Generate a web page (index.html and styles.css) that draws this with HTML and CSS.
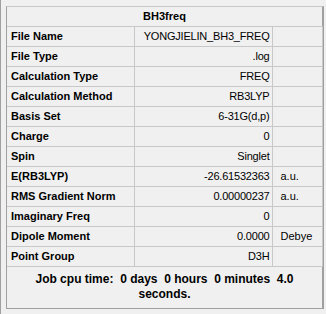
FILE: index.html
```html
<!DOCTYPE html>
<html lang="en">
<head>
  <meta charset="UTF-8">
  <title>BH3freq</title>
  <link rel="stylesheet" href="styles.css">
</head>
<body>
  <div class="panel">
    <table class="summary">
      <colgroup>
        <col class="col-label">
        <col class="col-value">
        <col class="col-unit">
      </colgroup>
      <thead>
        <tr>
          <th colspan="3">BH3freq</th>
        </tr>
      </thead>
      <tbody>
        <tr><td class="label">File Name</td><td class="value">YONGJIELIN_BH3_FREQ</td><td class="unit"></td></tr>
        <tr><td class="label">File Type</td><td class="value">.log</td><td class="unit"></td></tr>
        <tr><td class="label">Calculation Type</td><td class="value">FREQ</td><td class="unit"></td></tr>
        <tr><td class="label">Calculation Method</td><td class="value">RB3LYP</td><td class="unit"></td></tr>
        <tr><td class="label">Basis Set</td><td class="value">6-31G(d,p)</td><td class="unit"></td></tr>
        <tr><td class="label">Charge</td><td class="value">0</td><td class="unit"></td></tr>
        <tr><td class="label">Spin</td><td class="value">Singlet</td><td class="unit"></td></tr>
        <tr><td class="label">E(RB3LYP)</td><td class="value">-26.61532363</td><td class="unit">a.u.</td></tr>
        <tr><td class="label">RMS Gradient Norm</td><td class="value">0.00000237</td><td class="unit">a.u.</td></tr>
        <tr><td class="label">Imaginary Freq</td><td class="value">0</td><td class="unit"></td></tr>
        <tr><td class="label">Dipole Moment</td><td class="value">0.0000</td><td class="unit">Debye</td></tr>
        <tr><td class="label">Point Group</td><td class="value">D3H</td><td class="unit"></td></tr>
        <tr>
          <td class="cpu" colspan="3">Job cpu time:&nbsp; 0 days&nbsp; 0 hours&nbsp; 0 minutes&nbsp; 4.0<br>seconds.</td>
        </tr>
      </tbody>
    </table>
  </div>
</body>
</html>
```

FILE: styles.css
```css
* {
  margin: 0;
  padding: 0;
  box-sizing: border-box;
}
html, body {
  height: 100%;
}
body {
  background: #f0f0f0;
  border-left: 1px solid #a0a0a0;
  font-family: "Liberation Sans", Arial, sans-serif;
  font-size: 11px;
  color: #000;
}
.panel {
  margin: 6px 3px 0 5px;
  width: 318px;
  height: 303px;
  border: 1px solid #a0a0a0;
  border-right-width: 2px;
  border-top-color: #c8c8c8;
}
.summary {
  width: 315px;
  border-collapse: collapse;
  table-layout: fixed;
}
.col-label { width: 127px; }
.col-value { width: 138px; }
.col-unit { width: 50px; }
.summary th {
  height: 19px;
  font-weight: bold;
  text-align: center;
  border-bottom: 1px solid #c8c8c8;
}
.summary td {
  height: 20px;
  border: 1px solid #c8c8c8;
  border-left: none;
  padding: 0 3px;
  white-space: nowrap;
}
.label {
  font-weight: bold;
  padding-left: 4px !important;
}
.value {
  text-align: right;
  letter-spacing: -0.2px;
  padding-right: 2px !important;
}
.unit {
  padding-left: 8px !important;
}
.summary td.cpu {
  height: 41px;
  border-right: none;
  border-bottom: none;
  font-size: 12px;
  font-weight: bold;
  text-align: center;
  line-height: 15px;
  padding-top: 1px;
}
```
